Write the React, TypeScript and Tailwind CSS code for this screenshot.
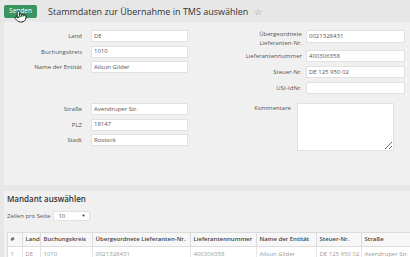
import React from 'react';
import { Pointer } from 'lucide-react';

const Field: React.FC<{ label: string; value?: string; labelW: string; inputW: string; gap: string }> = ({ label, value, labelW, inputW, gap }) => (
  <div className={`flex items-center h-[12px] ${gap}`}>
    <span className={`${labelW} text-right text-[6px] text-[#555] leading-none`}>{label}</span>
    <div className={`${inputW} h-[12px] bg-white border border-[#e2e2e2] flex items-center pl-[2px] text-[6px] text-[#555]`}>
      {value}
    </div>
  </div>
);

const COLS = [
  { h: '#', w: 'w-[15px]', v: '1' },
  { h: 'Land', w: 'w-[18px]', v: 'DE' },
  { h: 'Buchungskreis', w: 'w-[52px]', v: '1010' },
  { h: 'Übergeordnete Lieferanten-Nr.', w: 'w-[98px]', v: '0021328431' },
  { h: 'Lieferantennummer', w: 'w-[66px]', v: '400306358' },
  { h: 'Name der Entität', w: 'w-[60px]', v: 'Ailsun Gilder' },
  { h: 'Steuer-Nr.', w: 'w-[45px]', v: 'DE 125 950 02' },
  { h: 'Straße', w: 'w-[60px]', v: 'Avendruper Str.' },
];

const App: React.FC = () => {
  return (
    <div className="w-[410px] h-[257px] overflow-hidden bg-[#e7e7e7] font-['Open_Sans',sans-serif]">
      {/* Header */}
      <div className="h-[22px] flex items-center pl-[4px]">
        <div className="relative">
          <button className="w-[33px] h-[13px] rounded-[2px] bg-[#3a9460] text-white text-[6.5px] leading-none flex items-center justify-center">
            Senden
          </button>
          <Pointer size={13} fill="white" color="#111" strokeWidth={1.6} className="absolute left-[10px] top-[5px]" />
        </div>
        <h1 className="ml-[11px] text-[9px] text-[#333] leading-none">Stammdaten zur Übernahme in TMS auswählen</h1>
        <span className="ml-[6px] text-[9px] text-[#888] leading-none">☆</span>
      </div>

      {/* Form panel */}
      <div className="ml-[4px] h-[163px] bg-[#f0f0f0] pt-[8px]">
        <div className="flex">
          <div className="flex flex-col gap-[3.5px]">
            <Field label="Land" value="DE" labelW="w-[78px]" inputW="w-[97px]" gap="gap-[9px]" />
            <Field label="Buchungskreis" value="1010" labelW="w-[78px]" inputW="w-[97px]" gap="gap-[9px]" />
            <Field label="Name der Entität" value="Ailsun Gilder" labelW="w-[78px]" inputW="w-[97px]" gap="gap-[9px]" />
          </div>
          <div className="ml-[4px] flex flex-col gap-[4px]">
            <div className="flex items-start gap-[4px] h-[16px]">
              <span className="w-[110px] text-right text-[6px] text-[#555] leading-[9px]">
                Übergeordnete<br />Lieferanten-Nr.
              </span>
              <div className="w-[99px] h-[13px] bg-white border border-[#e2e2e2] flex items-center pl-[2px] text-[6px] text-[#555]">
                0021328431
              </div>
            </div>
            <Field label="Lieferantennummer" value="400306358" labelW="w-[110px]" inputW="w-[99px]" gap="gap-[4px]" />
            <Field label="Steuer-Nr." value="DE 125 950 02" labelW="w-[110px]" inputW="w-[99px]" gap="gap-[4px]" />
            <Field label="USt-IdNr." labelW="w-[110px]" inputW="w-[99px]" gap="gap-[4px]" />
          </div>
        </div>

        <div className="flex mt-[9px]">
          <div className="flex flex-col gap-[3.5px]">
            <Field label="Straße" value="Avendruper Str." labelW="w-[78px]" inputW="w-[97px]" gap="gap-[9px]" />
            <Field label="PLZ" value="18147" labelW="w-[78px]" inputW="w-[97px]" gap="gap-[9px]" />
            <Field label="Stadt" value="Rostock" labelW="w-[78px]" inputW="w-[97px]" gap="gap-[9px]" />
          </div>
          <div className="ml-[4px] flex items-start gap-[6px]">
            <span className="w-[99px] text-right text-[6px] text-[#555] leading-none mt-[2px]">Kommentare</span>
            <textarea className="w-[97px] h-[48px] bg-white border border-[#e2e2e2] outline-none" />
          </div>
        </div>
      </div>

      {/* Mandant panel */}
      <div className="ml-[4px] mt-[6px] h-[80px] bg-[#f0f0f0] pl-[3px] pt-[3px]">
        <h2 className="text-[8px] font-semibold text-[#333] leading-[10px]">Mandant auswählen</h2>
        <div className="mt-[7px] flex items-center gap-[3px]">
          <span className="text-[6px] text-[#555] leading-none">Zeilen pro Seite</span>
          <div className="w-[37px] h-[10px] bg-white border border-[#e2e2e2] flex items-center justify-between pl-[4px] pr-[4px] text-[6px] text-[#555]">
            <span>10</span>
            <span className="text-[4px] text-[#222]">▼</span>
          </div>
        </div>
        <div className="mt-[11px] border-t border-l border-[#dcdcdc]">
          <div className="flex h-[14px] bg-[#f7f7f7] border-b border-[#dcdcdc]">
            {COLS.map((c) => (
              <div key={c.h} className={`${c.w} shrink-0 border-r border-[#dcdcdc] flex items-center pl-[2.5px] text-[6px] font-semibold text-[#444] whitespace-nowrap overflow-hidden`}>
                {c.h}
              </div>
            ))}
          </div>
          <div className="flex h-[14px] bg-white">
            {COLS.map((c) => (
              <div key={c.h} className={`${c.w} shrink-0 border-r border-[#e6e6e6] flex items-center pl-[2.5px] text-[6px] text-[#999] whitespace-nowrap overflow-hidden`}>
                {c.v}
              </div>
            ))}
          </div>
        </div>
      </div>
    </div>
  );
};

export default App;
